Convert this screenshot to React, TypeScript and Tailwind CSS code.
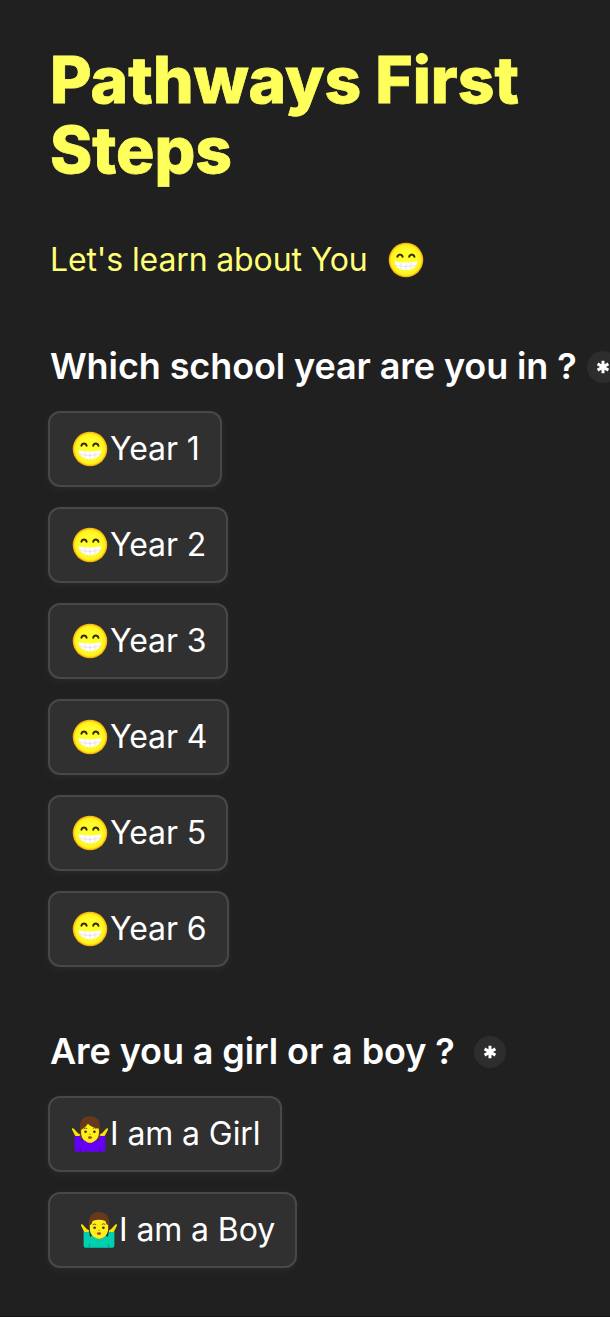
import { useState } from 'react'

interface Option {
  id: string
  label: string
  icon: 'grin' | 'girl' | 'boy'
}

const years: Option[] = [
  { id: 'y1', label: 'Year 1', icon: 'grin' },
  { id: 'y2', label: 'Year 2', icon: 'grin' },
  { id: 'y3', label: 'Year 3', icon: 'grin' },
  { id: 'y4', label: 'Year 4', icon: 'grin' },
  { id: 'y5', label: 'Year 5', icon: 'grin' },
  { id: 'y6', label: 'Year 6', icon: 'grin' },
]

const genders: Option[] = [
  { id: 'girl', label: 'I am a Girl', icon: 'girl' },
  { id: 'boy', label: 'I am a Boy', icon: 'boy' },
]

function GrinIcon() {
  return (
    <svg viewBox="0 0 38 38" className="h-[38px] w-[38px] shrink-0">
      <defs>
        <radialGradient id="face">
          <stop offset="0.5" stopColor="#ffff2b" />
          <stop offset="0.86" stopColor="#fff220" />
          <stop offset="1" stopColor="#f5a000" />
        </radialGradient>
      </defs>
      <circle cx="19" cy="19" r="17.3" fill="url(#face)" />
      <path d="M10.4 15.8c.7-3.2 4.5-3.2 5.2 0M22.2 15.8c.7-3.2 4.5-3.2 5.2 0" fill="none" stroke="#3d2900" strokeWidth="2" strokeLinecap="round" />
      <path d="M8.3 20.2Q19 23 29.7 20.2Q30.5 20.1 30.2 21.4C28.8 27 24.5 29 19 29S9.2 27 7.8 21.4Q7.5 20.1 8.3 20.2Z" fill="#fff" />
      <path d="M8.6 24.2Q19 27 29.4 24.2M14 22v6M19 22.4V29M24 22v6" fill="none" stroke="#d8d3dc" strokeWidth="0.6" />
    </svg>
  )
}

function ShrugIcon({ girl }: { girl?: boolean }) {
  return (
    <svg viewBox="0 0 38 38" className="h-[38px] w-[38px] shrink-0">
      {girl && <path d="M8.9 24V12C8.9 4.5 12.8 1.3 19 1.3S29.1 4.5 29.1 12v12Z" fill="#67381c" />}
      <path d="M4 20.5L.9 14.2Q.8 12.6 2.6 13.4L6.8 18L9.2 19.4L8.4 24H4ZM34 20.5L37.1 14.2Q37.2 12.6 35.4 13.4L31.2 18L28.8 19.4L29.6 24H34Z" fill="#ffe000" />
      <path
        d="M3.6 20.4Q6.5 21.7 9.2 20.4L10 26Q12 24.2 16 23.6H22Q26 24.2 28 26L28.8 20.4Q31.5 21.7 34.4 20.4V34.8Q34.4 36.8 32.3 36.8H5.7Q3.6 36.8 3.6 34.8Z"
        fill={girl ? '#6500f5' : '#00cfae'}
      />
      <path d="M9.3 33v3.8M28.7 33v3.8" stroke={girl ? '#4900b8' : '#009d88'} strokeWidth="1" />
      <path d="M15 20h8v6.5Q19 29.5 15 26.5Z" fill="#f5c000" />
      {!girl && <path d="M8.6 14C8.2 4.8 12.3 1 19 1S29.8 4.8 29.4 14l-2 3H10.6Z" fill="#67381c" />}
      <path
        d={
          girl
            ? 'M10.1 15Q14 13 17 8.7Q20 12.3 27.9 13.8V17.5C27.9 23.5 24.2 27.3 19 27.3S10.1 23.5 10.1 17.5Z'
            : 'M9.8 14.2Q12.2 13 12.6 10Q19 7.6 25.4 10Q25.8 13 28.2 14.2V17.5C28.2 23.5 24.4 27.3 19 27.3S9.8 23.5 9.8 17.5Z'
        }
        fill="#fff019"
      />
      <path d="M12.7 13.9Q14.5 12.2 16.2 13.7M21.8 13.5Q23.6 12 25.3 13.5" fill="none" stroke="#704020" strokeWidth="0.9" />
      <circle cx="14.6" cy="16.7" r="1.3" fill="#4a2b16" />
      <circle cx="23.4" cy="16.7" r="1.3" fill="#4a2b16" />
      <path d="M18 19.4h2" stroke="#e89b00" strokeWidth="0.9" />
      <ellipse cx="19" cy="22.6" rx="2.1" ry="1.3" fill="#b34119" />
    </svg>
  )
}

function OptionIcon({ icon }: { icon: Option['icon'] }) {
  if (icon === 'grin') return <GrinIcon />
  return <ShrugIcon girl={icon === 'girl'} />
}

function RequiredMark() {
  return (
    <span className="flex h-8 w-8 shrink-0 items-center justify-center rounded-full bg-[#2d2d2d]">
      <svg viewBox="0 0 14 14" className="h-[14px] w-[14px]">
        <path d="M7 .8v12.4M1.6 3.9l10.8 6.2M12.4 3.9L1.6 10.1" stroke="#fff" strokeWidth="3" />
      </svg>
    </span>
  )
}

function OptionList({ options }: { options: Option[] }) {
  const [selected, setSelected] = useState('')

  return (
    <div className="-ml-0.5 flex flex-col items-start gap-5">
      {options.map((option) => (
        <button
          key={option.id}
          aria-pressed={selected === option.id}
          onClick={() => setSelected(option.id)}
          className="flex h-[76px] items-center rounded-xl border-2 border-[#484848] bg-[#303030] pr-5 pl-[21px] text-[32px] tracking-[-0.1px] whitespace-nowrap text-white shadow-[0_2px_8px_rgba(255,255,255,0.05)]"
        >
          {option.icon === 'boy' && <span className="w-[9px]" />}
          <OptionIcon icon={option.icon} />
          <span className="ml-px">{option.label}</span>
        </button>
      ))}
    </div>
  )
}

export default function App() {
  return (
    <main className="h-[1317px] w-full overflow-hidden border-b border-[#141414] bg-[#202020] pt-[45px] pl-[50px] font-[Inter,sans-serif]">
      <h1 className="w-[520px] text-[64px] leading-[70px] font-extrabold text-[#ffff5c] [-webkit-text-stroke:0.8px_#ffff5c]">
        Pathways First Steps
      </h1>

      <p className="mt-[55px] flex h-10 items-center text-[32px] tracking-[-0.13px] whitespace-nowrap text-[#ffff78]">
        Let's learn about You
        <span className="ml-[19px]">
          <GrinIcon />
        </span>
      </p>

      <h2 className="mt-[64px] flex h-11 items-center text-[36px] tracking-[-0.1px] font-semibold whitespace-nowrap text-white">
        Which school year are you in ?
        <span className="ml-[10px] pt-px">
          <RequiredMark />
        </span>
      </h2>
      <div className="mt-[23px]">
        <OptionList options={years} />
      </div>

      <h2 className="mt-[62px] flex h-11 items-center text-[36px] tracking-[-0.1px] font-semibold whitespace-nowrap text-white">
        Are you a girl or a boy ?
        <span className="ml-[19px] pt-px">
          <RequiredMark />
        </span>
      </h2>
      <div className="mt-[23px]">
        <OptionList options={genders} />
      </div>
    </main>
  )
}
